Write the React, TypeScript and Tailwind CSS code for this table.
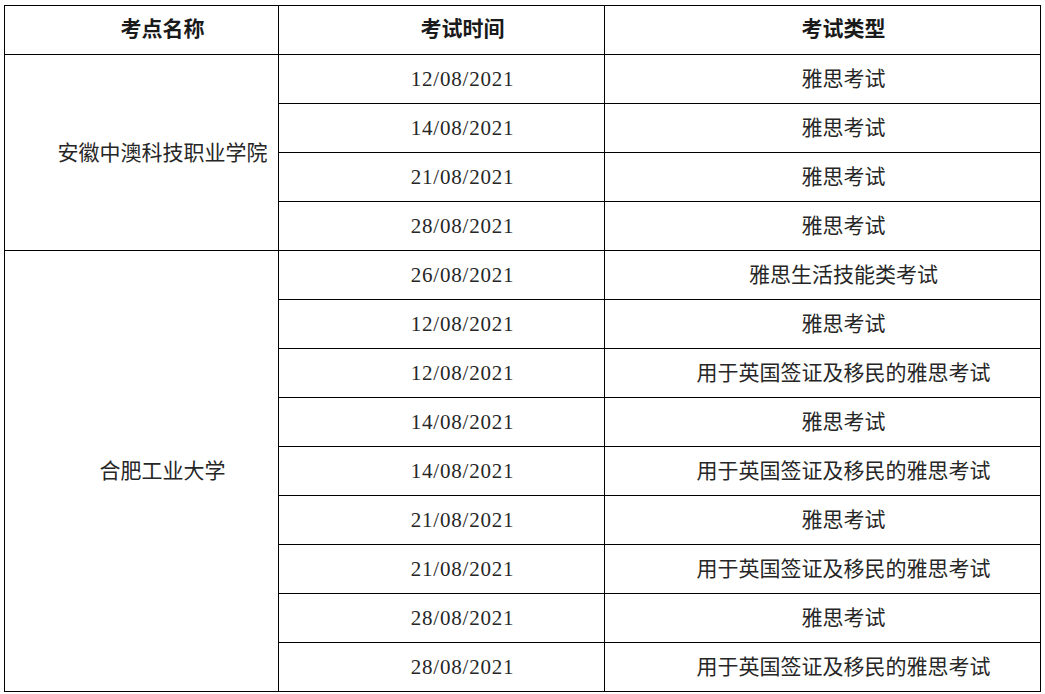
import React from "react";

const rows: { site?: string; span?: number; date: string; type: string }[] = [
  { site: "安徽中澳科技职业学院", span: 4, date: "12/08/2021", type: "雅思考试" },
  { date: "14/08/2021", type: "雅思考试" },
  { date: "21/08/2021", type: "雅思考试" },
  { date: "28/08/2021", type: "雅思考试" },
  { site: "合肥工业大学", span: 9, date: "26/08/2021", type: "雅思生活技能类考试" },
  { date: "12/08/2021", type: "雅思考试" },
  { date: "12/08/2021", type: "用于英国签证及移民的雅思考试" },
  { date: "14/08/2021", type: "雅思考试" },
  { date: "14/08/2021", type: "用于英国签证及移民的雅思考试" },
  { date: "21/08/2021", type: "雅思考试" },
  { date: "21/08/2021", type: "用于英国签证及移民的雅思考试" },
  { date: "28/08/2021", type: "雅思考试" },
  { date: "28/08/2021", type: "用于英国签证及移民的雅思考试" },
];

const font = { fontFamily: "'Liberation Serif', 'Noto Sans CJK SC', serif" };

export default function App() {
  return (
    <div className="bg-white w-[1045px] h-[694px] pt-[5px] pl-[4px]" style={font}>
      <table className="border-collapse w-[1036px] table-fixed text-[21px] text-[#1a1a1a]">
        <colgroup>
          <col className="w-[274px]" />
          <col className="w-[326px]" />
          <col className="w-[436px]" />
        </colgroup>
        <thead>
          <tr className="h-[49px]">
            <th className="border border-black font-bold text-center indent-[42px] p-0">考点名称</th>
            <th className="border border-black font-bold text-center indent-[42px] p-0">考试时间</th>
            <th className="border border-black font-bold text-center indent-[42px] p-0">考试类型</th>
          </tr>
        </thead>
        <tbody className="text-[#262626]">
          {rows.map((r, i) => (
            <tr key={i} className="h-[49px]">
              {r.site && (
                <td rowSpan={r.span} className="border border-black text-center indent-[42px] px-0 pt-[2px] pb-0 align-middle">
                  {r.site}
                </td>
              )}
              <td className="border border-black text-center indent-[42px] px-0 pt-[2px] pb-0 tracking-[0.8px]">{r.date}</td>
              <td className="border border-black text-center indent-[42px] px-0 pt-[2px] pb-0">{r.type}</td>
            </tr>
          ))}
        </tbody>
      </table>
    </div>
  );
}
